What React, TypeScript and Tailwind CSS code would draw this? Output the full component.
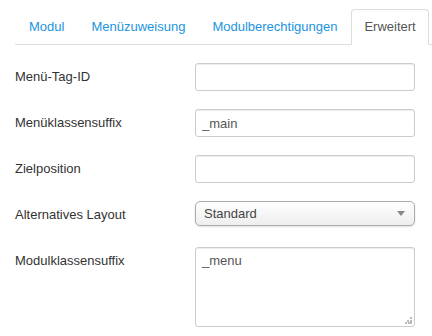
import { ChangeEvent, useState } from "react";

const tabs = ["Modul", "Menüzuweisung", "Modulberechtigungen", "Erweitert"];

const TextRow = ({ label, value }: { label: string; value: string }) => {
  const [v, setV] = useState(value);
  return (
    <div className="flex items-start h-[46px]">
      <label className="w-[180px] pt-[5px] leading-[18px] text-[#333]">{label}</label>
      <input
        value={v}
        onChange={(e: ChangeEvent<HTMLInputElement>) => setV(e.target.value)}
        className="w-[220px] h-[28px] px-[6px] py-[4px] leading-[18px] text-[#555] border border-[#ccc] rounded-[3px] shadow-[inset_0_1px_1px_rgba(0,0,0,0.075)] outline-none bg-white"
      />
    </div>
  );
};

export default function App() {
  const [active, setActive] = useState(3);

  return (
    <div className="w-[432px] h-[336px] bg-white pl-[15px] overflow-hidden" style={{ fontFamily: '"Liberation Sans", Arial, sans-serif', fontSize: 13 }}>
      <ul className="flex mt-[9px] pl-px border-b border-[#ddd]">
        {tabs.map((t, i) => (
          <li key={t} className="mr-px -mb-px">
            <button
              onClick={() => setActive(i)}
              className={
                i === active
                  ? "block px-3 py-2 leading-[18px] border border-[#ddd] border-b-white rounded-t-[4px] bg-white text-[#555]"
                  : "block px-3 py-2 leading-[18px] border border-transparent text-[#2394e0]"
              }
            >
              {t}
            </button>
          </li>
        ))}
      </ul>

      <div className="mt-[18px]">
        <TextRow label="Menü-Tag-ID" value="" />
        <TextRow label="Menüklassensuffix" value="_main" />
        <TextRow label="Zielposition" value="" />

        <div className="flex items-start h-[46px]">
          <label className="w-[180px] pt-[5px] leading-[18px] text-[#333]">Alternatives Layout</label>
          <div className="w-[220px] h-[25px] flex items-center justify-between pl-[8px] pr-[9px] border border-[#aaa] rounded-[5px] bg-gradient-to-b from-white to-[#eeeeee] shadow-[0_1px_2px_rgba(0,0,0,0.12)] text-[#444]">
            <span className="leading-[18px]">Standard</span>
            <svg width="8" height="5" viewBox="0 0 8 5">
              <path d="M0 0h8L4 5z" fill="#888" />
            </svg>
          </div>
        </div>

        <div className="flex items-start">
          <label className="w-[180px] pt-[5px] leading-[18px] text-[#333]">Modulklassensuffix</label>
          <div className="relative">
            <textarea
              defaultValue="_menu"
              className="block w-[220px] h-[80px] px-[6px] py-[4px] leading-[18px] text-[#555] border border-[#ccc] rounded-[3px] shadow-[inset_0_1px_1px_rgba(0,0,0,0.075)] outline-none resize-none bg-white"
            />
            <svg className="absolute right-[3px] bottom-[3px]" width="7" height="7" viewBox="0 0 7 7">
              <rect x="5" y="0" width="2" height="2" fill="#bbb" />
              <rect x="2" y="3" width="2" height="2" fill="#bbb" />
              <rect x="5" y="3" width="2" height="2" fill="#bbb" />
              <rect x="0" y="5" width="2" height="2" fill="#bbb" />
              <rect x="3" y="5" width="2" height="2" fill="#bbb" />
              <rect x="5" y="5" width="2" height="2" fill="#bbb" />
            </svg>
          </div>
        </div>
      </div>
    </div>
  );
}
